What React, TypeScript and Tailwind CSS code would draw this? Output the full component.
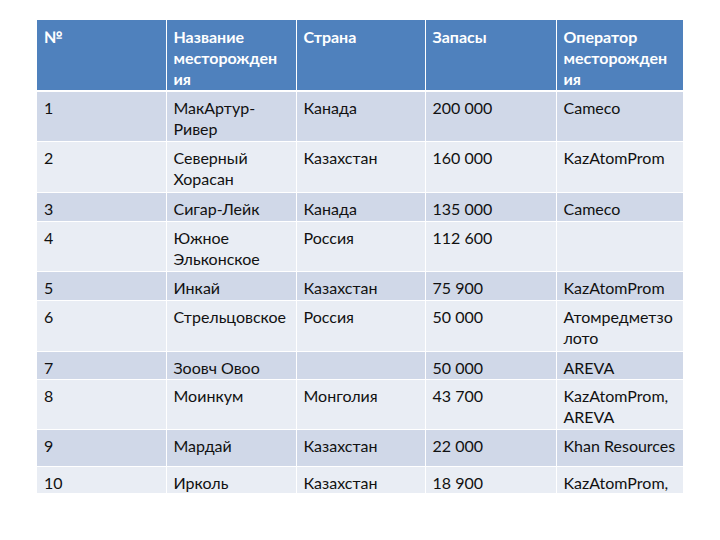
import React from "react";

type Row = { h: string; cells: React.ReactNode[] };

const rows: Row[] = [
  { h: "h-[50px]", cells: ["1", <>МакАртур-<br />Ривер</>, "Канада", "200 000", "Cameco"] },
  { h: "h-[51px]", cells: ["2", <>Северный<br />Хорасан</>, "Казахстан", "160 000", "KazAtomProm"] },
  { h: "h-[29px]", cells: ["3", "Сигар-Лейк", "Канада", "135 000", "Cameco"] },
  { h: "h-[50px]", cells: ["4", <>Южное<br />Эльконское</>, "Россия", "112 600", ""] },
  { h: "h-[29px]", cells: ["5", "Инкай", "Казахстан", "75 900", "KazAtomProm"] },
  { h: "h-[51px]", cells: ["6", "Стрельцовское", "Россия", "50 000", <>Атомредметзо<br />лото</>] },
  { h: "h-[28px]", cells: ["7", "Зоовч Овоо", "", "50 000", "AREVA"] },
  { h: "h-[50px]", cells: ["8", "Моинкум", "Монголия", "43 700", <>KazAtomProm,<br />AREVA</>] },
  { h: "h-[37px]", cells: ["9", "Мардай", "Казахстан", "22 000", "Khan Resources"] },
  { h: "h-[27px]", cells: ["10", "Ирколь", "Казахстан", "18 900", "KazAtomProm,"] },
];

const header: React.ReactNode[] = [
  "№",
  <>Название<br />месторожден<br />ия</>,
  "Страна",
  "Запасы",
  <>Оператор<br />месторожден<br />ия</>,
];

export default function App() {
  return (
    <div className="w-[720px] h-[540px] bg-white pt-[20px] pl-[37px] font-['Lato','Liberation_Sans',sans-serif]">
      <table className="table-fixed border-collapse w-[646px] text-[16px] leading-[21px]">
        <colgroup>
          <col className="w-[129px]" />
          <col className="w-[130px]" />
          <col className="w-[129px]" />
          <col className="w-[131px]" />
          <col className="w-[127px]" />
        </colgroup>
        <thead>
          <tr className="h-[71px] bg-[#4f81bd]">
            {header.map((c, i) => (
              <th
                key={i}
                className="border-x border-b-2 border-white first:border-l-0 last:border-r-0 px-[7px] pt-[6px] align-top text-left font-bold text-white"
              >
                {c}
              </th>
            ))}
          </tr>
        </thead>
        <tbody>
          {rows.map((r, ri) => (
            <tr key={ri} className={`${r.h} ${ri % 2 === 0 ? "bg-[#d0d8e8]" : "bg-[#e9edf4]"}`}>
              {r.cells.map((c, ci) => (
                <td
                  key={ci}
                  className="border border-white first:border-l-0 last:border-r-0 px-[7px] pt-[5px] align-top text-[#111]"
                >
                  {c}
                </td>
              ))}
            </tr>
          ))}
        </tbody>
      </table>
    </div>
  );
}
